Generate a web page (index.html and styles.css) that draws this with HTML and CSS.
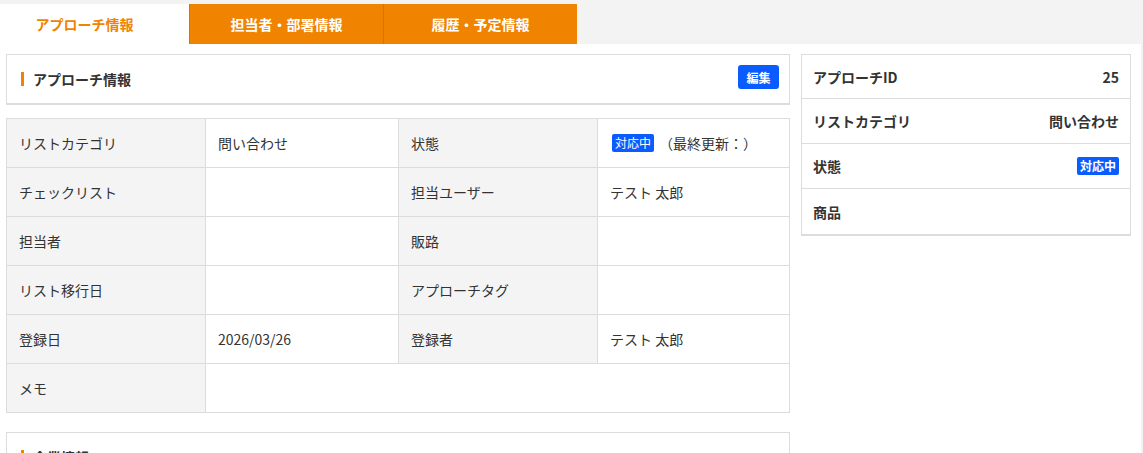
FILE: index.html
```html
<!DOCTYPE html>
<html lang="ja">
<head>
    <meta charset="UTF-8">
    <title>アプローチ詳細</title>
    <link rel="stylesheet" href="styles.css">
</head>
<body>
    <div class="tabs">
        <div class="tab active">アプローチ情報</div>
        <div class="tab">担当者・部署情報</div>
        <div class="tab">履歴・予定情報</div>
    </div>

    <div class="main">
        <div class="left-col">
            <div class="card">
                <div class="card-header">
                    <h2 class="card-title">アプローチ情報</h2>
                    <button class="edit-button">編集</button>
                </div>
            </div>

            <div class="detail-table">
                <div class="cell label">リストカテゴリ</div>
                <div class="cell">問い合わせ</div>
                <div class="cell label">状態</div>
                <div class="cell"><span class="badge">対応中</span><span class="updated">（最終更新：）</span></div>

                <div class="cell label">チェックリスト</div>
                <div class="cell"></div>
                <div class="cell label">担当ユーザー</div>
                <div class="cell">テスト 太郎</div>

                <div class="cell label">担当者</div>
                <div class="cell"></div>
                <div class="cell label">販路</div>
                <div class="cell"></div>

                <div class="cell label">リスト移行日</div>
                <div class="cell"></div>
                <div class="cell label">アプローチタグ</div>
                <div class="cell"></div>

                <div class="cell label">登録日</div>
                <div class="cell">2026/03/26</div>
                <div class="cell label">登録者</div>
                <div class="cell">テスト 太郎</div>

                <div class="cell label">メモ</div>
                <div class="cell span-3"></div>
            </div>

            <div class="card">
                <div class="card-header">
                    <h2 class="card-title">企業情報</h2>
                </div>
            </div>
        </div>

        <div class="side-card">
            <div class="side-row">
                <span>アプローチID</span>
                <span>25</span>
            </div>
            <div class="side-row">
                <span>リストカテゴリ</span>
                <span>問い合わせ</span>
            </div>
            <div class="side-row">
                <span>状態</span>
                <span class="badge">対応中</span>
            </div>
            <div class="side-row">
                <span>商品</span>
                <span></span>
            </div>
        </div>
    </div>
</body>
</html>
```

FILE: styles.css
```css
:root {
    --page-bg: #f3f3f3;
    --text-color: #333;
    --orange: #f08300;
    --orange-border: #d77500;
    --blue: #0b5cff;
    --border-color: #dcdcdc;
    --label-bg: #f4f4f4;
}

* {
    margin: 0;
    padding: 0;
    box-sizing: border-box;
}

body {
    background-color: var(--page-bg);
    color: var(--text-color);
    font-family: "Noto Sans CJK JP", "Noto Sans", sans-serif;
    font-size: 14px;
    height: 453px;
    overflow: hidden;
}

.tabs {
    display: flex;
    padding-top: 4px;
}

.tab {
    height: 40px;
    display: flex;
    align-items: center;
    justify-content: center;
    background-color: var(--orange);
    color: #fff;
    font-size: 14px;
    font-weight: bold;
    width: 194px;
}

.tab + .tab {
    border-left: 1px solid var(--orange-border);
}

.tab.active {
    width: 189px;
    padding-right: 20px;
    background-color: #fff;
    color: var(--orange);
}

.main {
    display: flex;
    align-items: flex-start;
    gap: 11px;
    width: 1141px;
    height: 409px;
    padding: 10px 10px 0 6px;
    background-color: #fff;
}

.left-col {
    width: 784px;
    display: flex;
    flex-direction: column;
    gap: 13px;
}

.card {
    background-color: #fff;
    border: 1px solid var(--border-color);
    border-bottom-width: 2px;
}

.left-col .card:last-child {
    margin-top: 6px;
}

.card-header {
    height: 48px;
    display: flex;
    align-items: center;
    justify-content: space-between;
    padding: 0 10px 0 14px;
}

.card-title {
    font-size: 14px;
    font-weight: bold;
    line-height: 14px;
    padding-left: 9px;
    border-left: 3px solid var(--orange);
}

.edit-button {
    width: 41px;
    height: 24px;
    border: none;
    border-radius: 3px;
    background-color: var(--blue);
    color: #fff;
    font-family: inherit;
    font-size: 12px;
    font-weight: bold;
    margin-top: -4px;
}

.detail-table {
    display: grid;
    grid-template-columns: 199px 193px 199px 1fr;
    border-top: 1px solid var(--border-color);
    border-left: 1px solid var(--border-color);
}

.cell {
    height: 49px;
    display: flex;
    align-items: center;
    padding: 0 12px;
    border-right: 1px solid var(--border-color);
    border-bottom: 1px solid var(--border-color);
    line-height: 1;
}

.cell.label {
    background-color: var(--label-bg);
}

.cell.span-3 {
    grid-column: span 3;
}

.cell .badge {
    margin-left: 2px;
}

.badge {
    display: inline-block;
    background-color: var(--blue);
    color: #fff;
    font-size: 12px;
    line-height: 18px;
    padding: 0 3px;
    border-radius: 2px;
}

.updated {
    margin-left: 5px;
}

.side-card {
    width: 330px;
    border: 1px solid var(--border-color);
    border-bottom-width: 2px;
}

.side-row {
    height: 45px;
    display: flex;
    align-items: center;
    justify-content: space-between;
    padding: 0 11px 0 11px;
    font-weight: bold;
    border-bottom: 1px solid var(--border-color);
}

.side-row:first-child {
    height: 44px;
}

.side-row:last-child {
    border-bottom: none;
}

.side-row .badge {
    font-weight: bold;
}
```
